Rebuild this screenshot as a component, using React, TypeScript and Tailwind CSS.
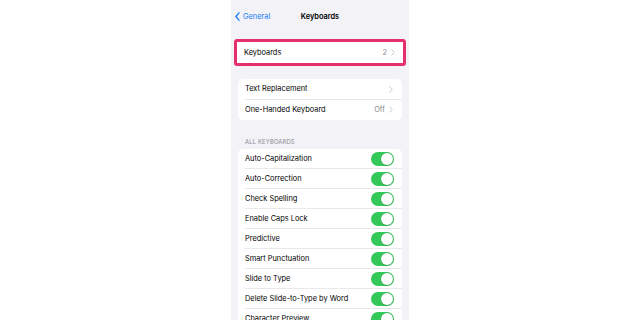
import { Fragment } from "react";

const font = { fontFamily: "Inter, 'Liberation Sans', sans-serif" };

function Chevron() {
  return (
    <svg width="4" height="7" viewBox="0 0 4 7" fill="none" className="shrink-0">
      <path d="M0.8 0.8 L3.2 3.5 L0.8 6.2" stroke="#c4c4c8" strokeWidth="0.9" strokeLinecap="round" strokeLinejoin="round" />
    </svg>
  );
}

function Toggle() {
  return (
    <div className="w-[23px] h-[14px] rounded-full bg-[#34c759] flex items-center justify-end pr-[1px] shrink-0">
      <div className="w-[12px] h-[12px] rounded-full bg-white shadow-[0_0.5px_1.5px_rgba(0,0,0,0.25)]" />
    </div>
  );
}

function Separator() {
  return <div className="ml-[7px] h-px bg-[#e9e9ec]" />;
}

function LinkRow({ label, value }: { label: string; value?: string }) {
  return (
    <div className="h-[20px] flex items-center justify-between pl-[7px] pr-[9px]">
      <span className="text-[7.4px] text-black">{label}</span>
      <div className="flex items-center gap-[4px]">
        {value && <span className="text-[7.4px] text-[#8a8a8e]">{value}</span>}
        <Chevron />
      </div>
    </div>
  );
}

const toggles = [
  "Auto-Capitalization",
  "Auto-Correction",
  "Check Spelling",
  "Enable Caps Lock",
  "Predictive",
  "Smart Punctuation",
  "Slide to Type",
  "Delete Slide-to-Type by Word",
  "Character Preview",
];

export default function App() {
  return (
    <div className="w-[640px] h-[320px] bg-white flex justify-center overflow-hidden" style={font}>
      <div className="w-[178px] h-full bg-[#f2f2f7] flex flex-col *:shrink-0">
        <div className="h-[33px] pt-[1px] grid grid-cols-[1fr_auto_1fr] items-center">
          <div className="flex items-center gap-[3px] pl-[4px] text-[#1a7cf5]">
            <svg width="5" height="9" viewBox="0 0 5 9" fill="none">
              <path d="M4 0.8 L0.9 4.5 L4 8.2" stroke="#1a7cf5" strokeWidth="1.3" strokeLinecap="round" strokeLinejoin="round" />
            </svg>
            <span className="text-[7.4px]">General</span>
          </div>
          <span className="text-[7.4px] font-semibold text-black">Keyboards</span>
          <div />
        </div>

        <div className="mt-[6px] mx-[3px] border-[3px] border-[#e7306b] rounded-[3px] bg-white">
          <div className="h-[21px] flex items-center justify-between pl-[7px] pr-[8px]">
            <span className="text-[7.4px] text-black">Keyboards</span>
            <div className="flex items-center gap-[4px]">
              <span className="text-[7.4px] text-[#8a8a8e]">2</span>
              <Chevron />
            </div>
          </div>
        </div>

        <div className="mt-[13px] mx-[7px] bg-white rounded-[5px]">
          <LinkRow label="Text Replacement" />
          <Separator />
          <LinkRow label="One-Handed Keyboard" value="Off" />
        </div>

        <div className="pt-[18px] pb-[3px] px-[14px] text-[5.8px] leading-[8px] tracking-[0.2px] text-[#8a8a8e]">
          ALL KEYBOARDS
        </div>

        <div className="mx-[7px] bg-white rounded-[5px]">
          {toggles.map((t, i) => (
            <Fragment key={t}>
              {i > 0 && <Separator />}
              <div className="h-[19px] flex items-center justify-between pl-[7px] pr-[8px]">
                <span className="text-[7.4px] text-black">{t}</span>
                <Toggle />
              </div>
            </Fragment>
          ))}
        </div>
      </div>
    </div>
  );
}
